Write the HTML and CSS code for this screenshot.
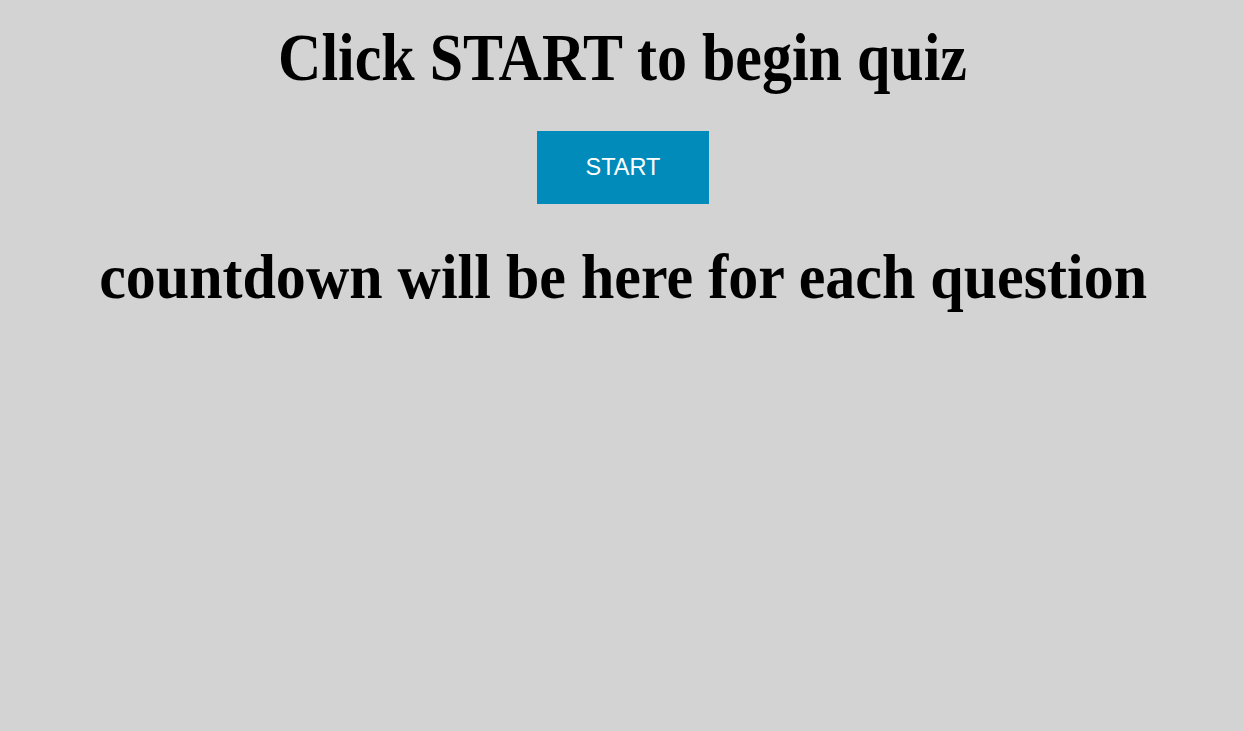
FILE: index.html
```html
<!DOCTYPE html>
<html>
<head>
<meta charset="utf-8">
<link rel="stylesheet" href="styles.css">
</head>
<body>
<div class="page">
  <h1 class="title">Click START to begin quiz</h1>
  <button class="start-btn">START</button>
  <h1 class="countdown">countdown will be here for each question</h1>
</div>
</body>
</html>
```
FILE: styles.css
```css
html, body {
  margin: 0;
  padding: 0;
  background: #d3d3d3;
  height: 100%;
}
.page {
  display: flex;
  flex-direction: column;
  align-items: center;
  padding-left: 3px;
  font-family: "Liberation Serif", "Times New Roman", serif;
}
.title {
  margin: 23px 0 0;
  font-size: 68px;
  font-weight: bold;
  line-height: 68px;
  white-space: nowrap;
  transform: scaleX(0.882);
}
.start-btn {
  margin-top: 40px;
  width: 172px;
  height: 73px;
  background: #008bba;
  border: none;
  color: #fff;
  font-family: "Liberation Sans", Arial, sans-serif;
  font-size: 23.5px;
  padding: 0;
}
.countdown {
  margin: 42px 0 0;
  font-size: 63px;
  font-weight: bold;
  line-height: 63px;
  white-space: nowrap;
  transform: scaleX(0.9525);
}
```
